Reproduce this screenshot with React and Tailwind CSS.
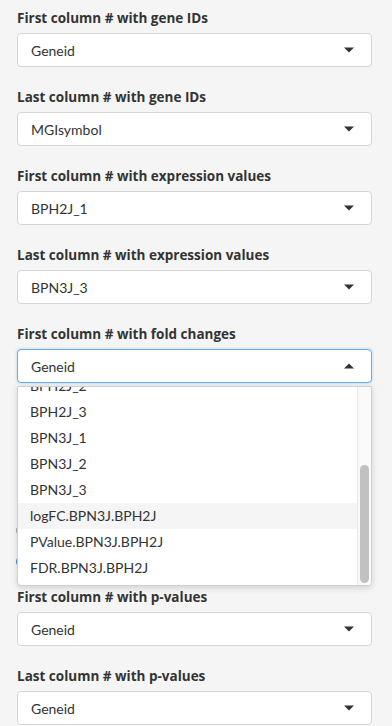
import React from "react";

const font = { fontFamily: "Lato, 'Open Sans', sans-serif" };
const labelFont = { fontFamily: "'Open Sans', Lato, sans-serif" };

function Caret({ up }) {
  return up ? (
    <span className="absolute right-[17px] top-1/2 -translate-y-1/2 w-0 h-0 border-l-[5px] border-r-[5px] border-b-[5px] border-l-transparent border-r-transparent border-b-[#333]" />
  ) : (
    <span className="absolute right-[17px] top-1/2 -translate-y-1/2 w-0 h-0 border-l-[5px] border-r-[5px] border-t-[5px] border-l-transparent border-r-transparent border-t-[#333]" />
  );
}

function Select({ value, open }) {
  return (
    <div
      className={
        "relative h-[34px] rounded-[4px] bg-white flex items-center pl-[13px] text-[14px] text-[#333] border " +
        (open ? "border-[#66afe9] shadow-[0_0_3px_rgba(102,175,233,0.5)]" : "border-[#d6d6d6]")
      }
    >
      <span>{value}</span>
      <Caret up={open} />
    </div>
  );
}

function Group({ label, value, open, children }) {
  return (
    <div className="relative mb-[20px]">
      <div className="h-[20px] mb-[5px] text-[13.5px] leading-[20px] font-bold text-[#333]" style={labelFont}>
        {label}
      </div>
      <Select value={value} open={open} />
      {children}
    </div>
  );
}

const items = [
  "BPH2J_2",
  "BPH2J_3",
  "BPN3J_1",
  "BPN3J_2",
  "BPN3J_3",
  "logFC.BPN3J.BPH2J",
  "PValue.BPN3J.BPH2J",
  "FDR.BPN3J.BPH2J",
];

function Dropdown() {
  return (
    <div className="absolute left-0 right-0 top-[62px] h-[200px] z-10 bg-white border border-[#d0d0d0] rounded-b-[4px] shadow-[0_2px_6px_rgba(0,0,0,0.15)] overflow-hidden flex">
      <div className="flex-1 overflow-hidden">
        <div className="mt-[-14px]">
          {items.map((it) => (
            <div
              key={it}
              className={
                "h-[26px] leading-[26px] pl-[12px] text-[14px] text-[#333] " +
                (it.startsWith("logFC") ? "bg-[#f5f5f5]" : "")
              }
            >
              {it}
            </div>
          ))}
        </div>
      </div>
      <div className="w-[14px] bg-[#fafafa] border-l border-[#e8e8e8] relative">
        <div className="absolute left-[2px] w-[9px] top-[78px] h-[118px] rounded-full bg-[#c1c1c1]" />
      </div>
    </div>
  );
}

export default function App() {
  return (
    <div className="w-[392px] h-[726px] overflow-hidden bg-[#f5f5f5]" style={font}>
      <div className="pl-[17px] pr-[20px] pt-[8px]">
        <Group label="First column # with gene IDs" value="Geneid" />
        <Group label="Last column # with gene IDs" value="MGIsymbol" />
        <Group label="First column # with expression values" value="BPH2J_1" />
        <Group label="Last column # with expression values" value="BPN3J_3" />
        <Group label="First column # with fold changes" value="Geneid" open>
          <Dropdown />
        </Group>
        <div className="h-[184px] pt-[112px]">
          <div className="h-[31px] flex items-center ml-[-1px]">
            <span className="w-[13px] h-[13px] rounded-full border border-[#999] bg-white" />
          </div>
          <div className="h-[31px] flex items-center ml-[-1px]">
            <span className="w-[13px] h-[13px] rounded-full border-[4px] border-[#2a7ae2] bg-white" />
          </div>
        </div>
        <Group label="First column # with p-values" value="Geneid" />
        <Group label="Last column # with p-values" value="Geneid" />
      </div>
    </div>
  );
}
